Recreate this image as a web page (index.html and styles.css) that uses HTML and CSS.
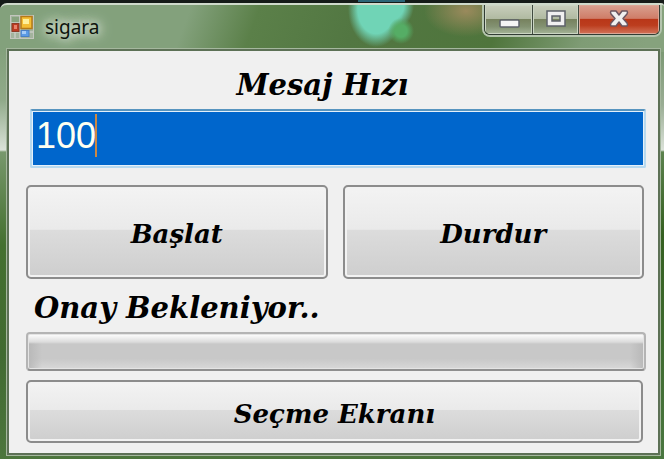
FILE: index.html
```html
<!DOCTYPE html>
<html lang="tr">
<head>
  <meta charset="UTF-8">
  <meta name="viewport" content="width=device-width, initial-scale=1.0">
  <title>sigara</title>
  <link rel="stylesheet" href="styles.css">
</head>
<body>
  <div class="window">
    <header class="titlebar">
      <svg class="app-icon" width="24" height="24" viewBox="0 0 24 24" aria-hidden="true">
        <rect x="0.5" y="0.5" width="23" height="23" fill="#a3b39d" stroke="#c3c6be"/>
        <path d="M1 8H10M10 1V23M1 17H23M5 17V23" stroke="#c8cbc4" stroke-width="1.5"/>
        <rect x="2" y="2" width="7" height="5" fill="#87a37e"/>
        <rect x="2" y="8.5" width="7" height="8" fill="#bd3a22" stroke="#8e3a26"/>
        <rect x="4" y="10" width="3" height="4" fill="#e8806a"/>
        <rect x="11" y="1.5" width="11" height="12" fill="#f4be35" stroke="#b57a18" stroke-width="1.5"/>
        <rect x="13" y="4" width="6" height="5" fill="#fff09a"/>
        <rect x="11" y="15.5" width="8" height="6" fill="#5b9be6" stroke="#4b7fc4"/>
        <rect x="12" y="16" width="4" height="3" fill="#a5ccf8"/>
      </svg>
      <h1 class="caption">sigara</h1>
      <div class="window-controls">
        <button class="control" type="button" aria-label="Simge durumuna küçült">
          <svg width="22" height="20" viewBox="0 0 22 20">
            <rect x="2" y="10" width="19" height="7" rx="1" fill="#f4f4f4" stroke="#5d616a" stroke-width="1.5"/>
          </svg>
        </button>
        <button class="control" type="button" aria-label="Ekranı kapla">
          <svg width="22" height="20" viewBox="0 0 22 20">
            <path fill-rule="evenodd" d="M2 1H20V16H2ZM7 6V11H15V6Z" fill="#f0f0f0" stroke="#5d616a" stroke-width="1.5"/>
          </svg>
        </button>
        <button class="control close" type="button" aria-label="Kapat">
          <svg width="22" height="20" viewBox="0 0 22 20">
            <path d="M3 1H8L11 5L14 1H19Q20 2 19 4L15 8.500L19 13Q20 15 19 16H14L11 12L8 16H3Q2 15 3 13L7 8.500L3 4Q2 2 3 1Z" fill="#f0f0f0" stroke="#6b5560" stroke-width="1.5" stroke-linejoin="round"/>
          </svg>
        </button>
      </div>
    </header>
    <main class="client">
      <label class="label speed-label" for="speed">Mesaj Hızı</label>
      <div class="field">
        <input class="speed" id="speed" type="text" value="100">
        <span class="caret"></span>
      </div>
      <div class="actions">
        <button class="btn" type="button">Başlat</button>
        <button class="btn" type="button">Durdur</button>
      </div>
      <p class="label status">Onay Bekleniyor..</p>
      <div class="progress" role="progressbar" aria-label="Onay Bekleniyor"></div>
      <button class="btn select-screen" type="button">Seçme Ekranı</button>
    </main>
  </div>
</body>
</html>
```

FILE: styles.css
```css
* {
  box-sizing: border-box;
}

body {
  margin: 0;
  padding-top: 3px;
  background: linear-gradient(90deg, transparent 358px, #2b6577 358px, #2b6577 405px, transparent 405px) 0 0 / 100% 2px no-repeat, #151b18;
  min-height: 100vh;
  display: flex;
}

.window {
  flex: 1;
  display: flex;
  flex-direction: column;
  padding: 0 4px 4px 7px;
  border-top: 2px solid #cfdacb;
  border-radius: 7px 3px 0 0;
  background:
    radial-gradient(circle at 401px 26px, #55ad65 0, #55ad65 6px, transparent 13px),
    radial-gradient(ellipse at 392px 0, #70d4b6 0, #70d4b6 12px, transparent 22px),
    radial-gradient(ellipse 28px 38px at 376px 4px, #70d4b6 65%, transparent 100%),
    radial-gradient(ellipse 42px 26px at 466px 6px, #9a8a5c, transparent),
    linear-gradient(180deg, transparent 47px, #84a17c 47px, #90aa89 95px, #dbe2d9 145px, #78986c 147px, #44702f 240px, #416a31 350px, #4d763d 100%) 0 0 / 7px 100% no-repeat,
    linear-gradient(180deg, transparent 47px, #7c9974 47px, #9aad94 100px, #dbe2d9 145px, #5c824e 147px, #356021 230px, #4a7740 100%) 100% 0 / 4px 100% no-repeat,
    linear-gradient(110deg, #83a17c 0, #83a17c 180px, #5b8049 245px, #527742 340px, #4f753c 475px, #7f9c75 560px, #86a27d 620px) 0 0 / 100% 50px no-repeat,
    #4d763d;
}

.titlebar {
  height: 44px;
  display: flex;
  align-items: center;
  padding-left: 3px;
}

.caption {
  flex: 1;
  margin: 0;
  padding-left: 11px;
  font: 19px/28px "Noto Sans", sans-serif;
  color: #0d130d;
  text-shadow: 0 0 8px #dce5da, 0 0 12px #dce5da, 0 0 16px #dce5da;
}

.window-controls {
  align-self: flex-start;
  display: flex;
  height: 30px;
  border: 1px solid #323d35;
  border-top: 0;
  border-radius: 0 0 6px 6px;
  box-shadow: 0 0 0 2px #b5c5ae;
  overflow: hidden;
  clip-path: inset(0 -2px -2px -2px);
}

.control {
  width: 48px;
  padding: 0;
  display: flex;
  align-items: center;
  justify-content: center;
  border: 0;
  border-right: 1px solid #414b40;
  background: linear-gradient(#c9cfbd 0, #b0baa1 48%, #77825f 50%, #839272 75%, #a6b599 100%);
  box-shadow: inset 0 0 0 1px #cbd5c3;
}

.control:nth-child(2) {
  width: 46px;
}

.close {
  width: 80px;
  border-right: 0;
  background: linear-gradient(#d9a190 0, #cf7d68 46%, #b93719 50%, #bc3d1e 70%, #d2745a 100%);
  box-shadow: inset 0 0 0 1px #dba796;
}

.client {
  flex: 1;
  display: flex;
  flex-direction: column;
  padding: 14px 12px 9px 17px;
  border: 2px solid #5d7156;
  outline: 1px solid #a5b79e;
  background: #f0f0f0;
}

.label {
  margin: 0;
  font: italic bold 29px/40px "DejaVu Serif", serif;
  color: #000;
}

.speed-label {
  text-align: center;
  padding-right: 27px;
}

.field {
  position: relative;
  margin: 4px 0 0 4px;
}

.speed {
  display: block;
  width: 100%;
  height: 59px;
  padding: 0 4px 5px;
  border: 2px solid #b7d9ef;
  border-top-color: #5794bf;
  border-radius: 2px;
  background: #0066cc;
  box-shadow: inset 0 0 0 1px #e4f0fa;
  font: 36px "Liberation Sans", Arial, sans-serif;
  color: #fffff0;
  outline: 0;
}

.caret {
  position: absolute;
  left: 65px;
  top: 5px;
  width: 2px;
  height: 43px;
  background: #cc8844;
}

.actions {
  display: flex;
  gap: 15px;
  margin: 17px 2px 0 0;
}

.btn {
  flex: 1;
  height: 94px;
  padding: 4px 0 0;
  border: 2px solid #8c8c8c;
  border-radius: 5px;
  background: linear-gradient(#f3f3f3 0, #eaeaea 47%, #dcdcdc 48%, #cecece 100%);
  box-shadow: inset 0 0 0 2px #f2f2f2;
  font: italic bold 26px/32px "DejaVu Serif", serif;
  color: #000;
}

.btn:active {
  background: #d2e4f0;
}

.status {
  margin: 9px 0 0 8px;
}

.progress {
  height: 39px;
  margin-top: 4px;
  border: 2px solid #b4b4b4;
  border-bottom-color: #8f8f8f;
  border-radius: 4px;
  background:
    linear-gradient(#ffffff 0, #dcdcdc 8px, transparent 10px),
    linear-gradient(90deg, #b8b8b8 0, transparent 14px, transparent calc(100% - 14px), #b8b8b8 100%),
    linear-gradient(#c8c8c8 70%, #d8d8d8 100%);
  box-shadow: inset 0 0 0 1px #e4e4e4;
}

.select-screen {
  flex: none;
  height: 63px;
  margin: 9px 3px 0 0;
}
```
